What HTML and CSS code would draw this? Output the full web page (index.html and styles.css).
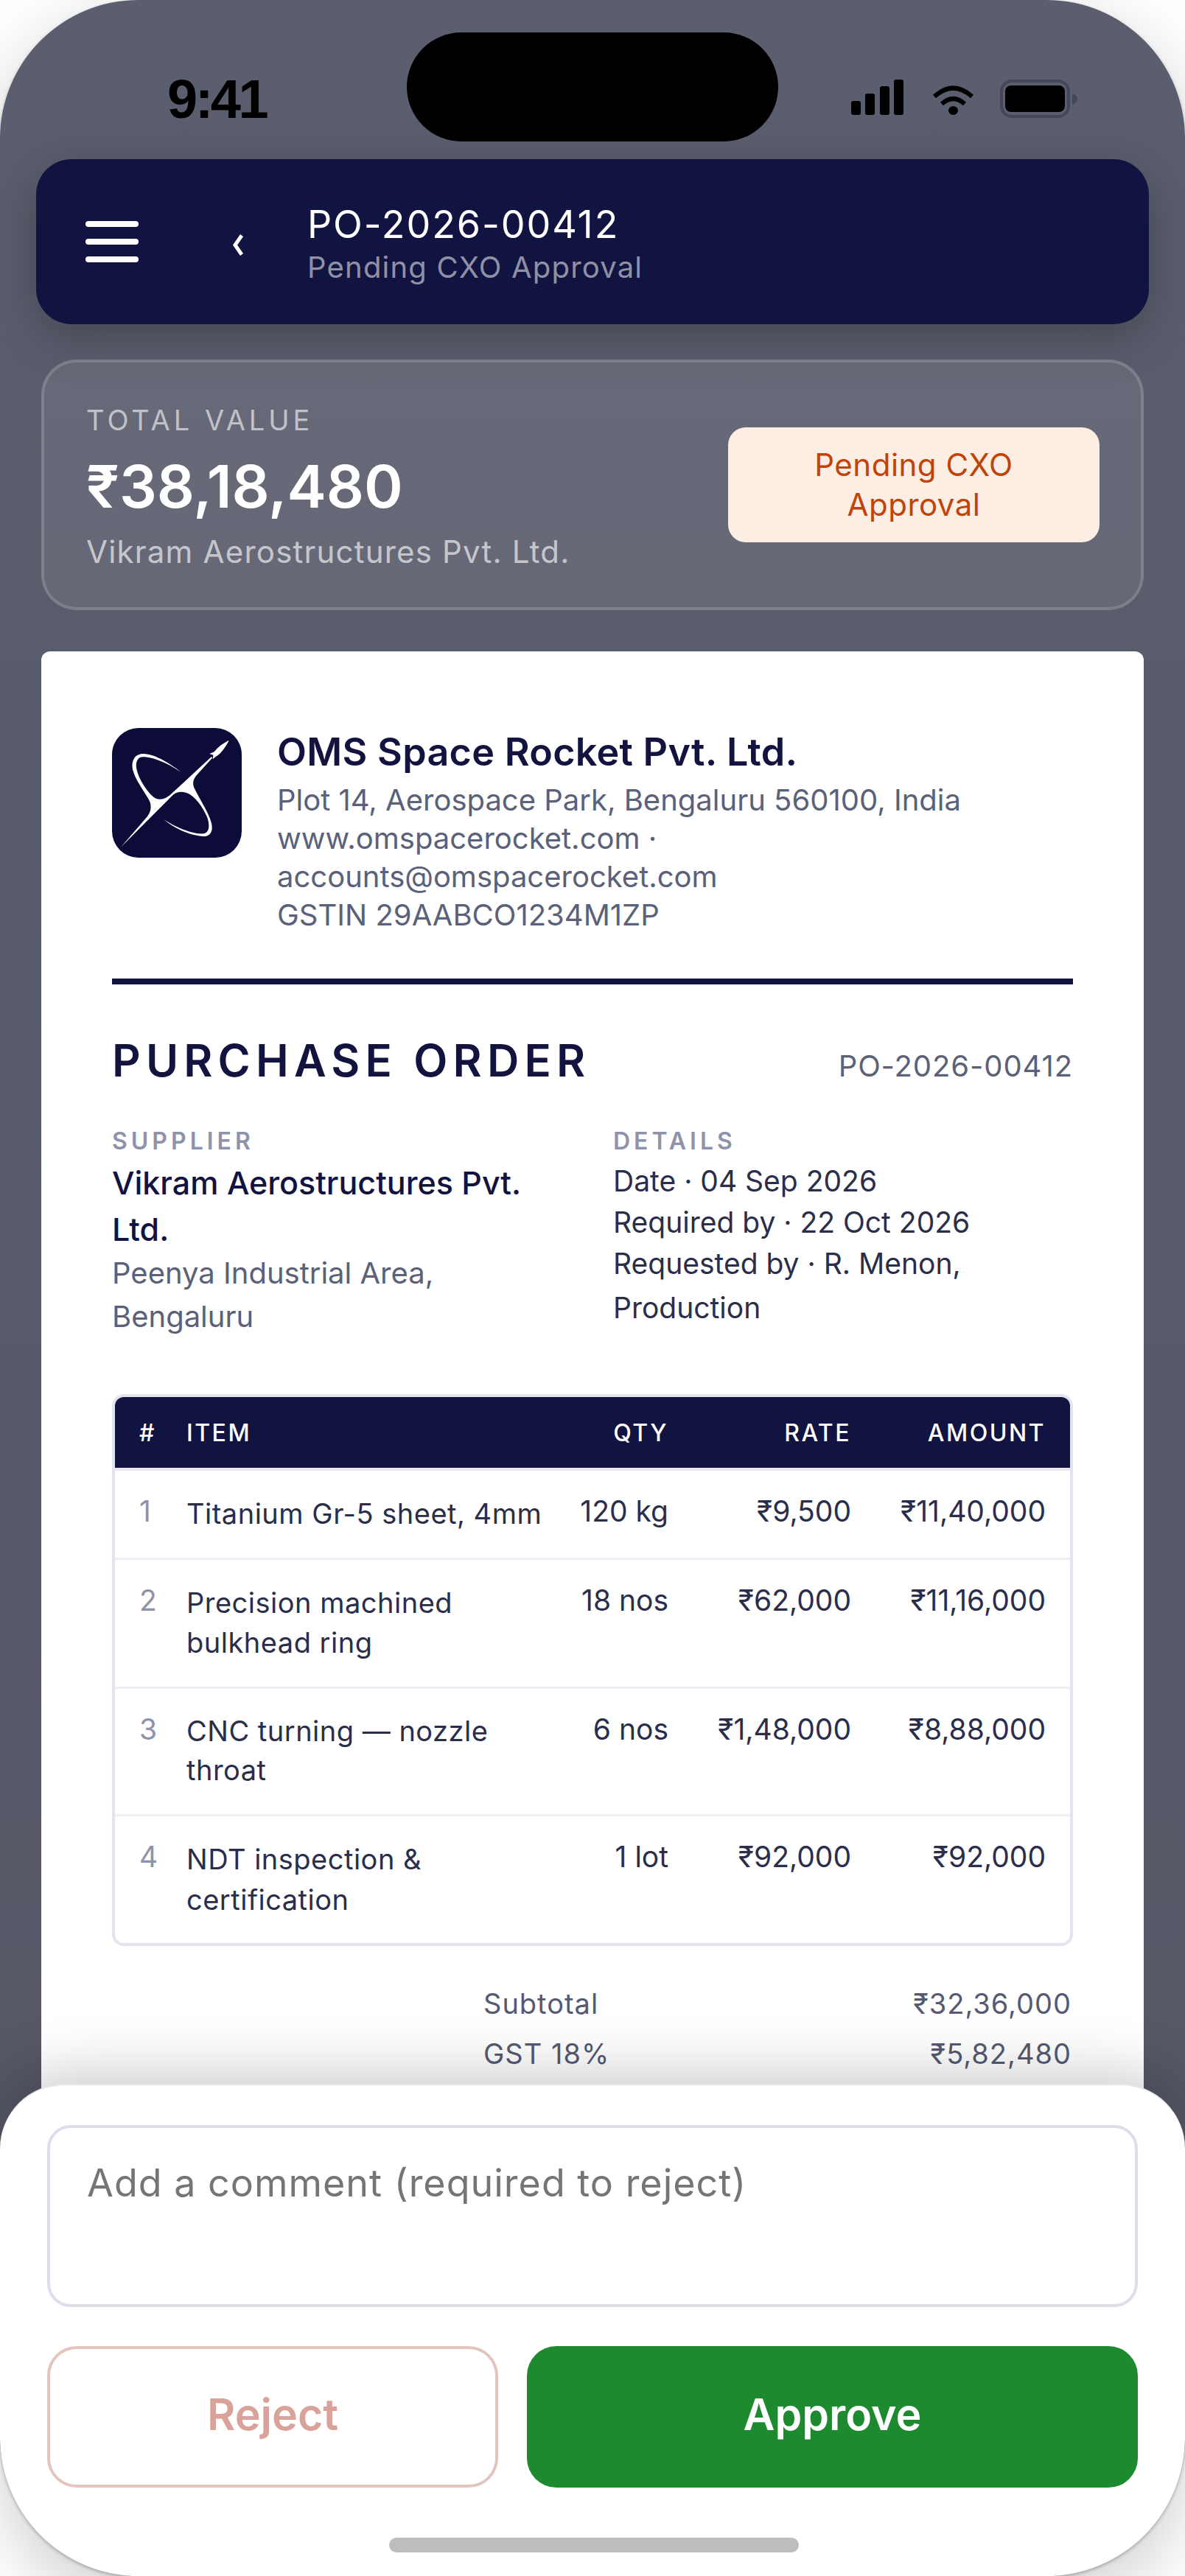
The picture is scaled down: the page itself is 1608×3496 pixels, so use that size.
FILE: index.html
```html
<!doctype html>
<html>
<head>
<meta charset="utf-8">
<title>PO-2026-00412</title>
<link rel="stylesheet" href="styles.css">
</head>

<body>
<div class="phone">
	<div class="island"></div>

	<div class="status">
		<span class="time">9:41</span>
		<div class="status-icons">
			<svg class="ico-signal" width="71" height="48" viewBox="0 0 71 48">
				<rect x="0" y="29" width="13" height="19" rx="3"/>
				<rect x="19" y="19" width="13" height="29" rx="3"/>
				<rect x="39" y="9" width="13" height="39" rx="3"/>
				<rect x="58" y="0" width="13" height="48" rx="3"/>
			</svg>
			<svg class="ico-wifi" width="57" height="42" viewBox="0 0 57 42">
				<path d="M3 17Q28.5 -6 54 17" fill="none" stroke="#000" stroke-width="6"/>
				<path d="M13 27Q28.5 13 44 27" fill="none" stroke="#000" stroke-width="6"/>
				<ellipse cx="28.5" cy="36" rx="6.5" ry="6"/>
			</svg>
			<svg class="ico-battery" width="105" height="52" viewBox="0 0 105 52">
				<rect x="2" y="2" width="91" height="48" rx="14" fill="none" stroke="#44465a" stroke-width="4"/>
				<rect x="7" y="8" width="81" height="36" rx="8"/>
				<path d="M98 19C102 20 105 23 105 26C105 29 102 32 98 34Z" fill="#44465a"/>
			</svg>
		</div>
	</div>

	<div class="topbar">
		<div class="burger"><span></span><span></span><span></span></div>
		<svg class="back" width="16" height="29" viewBox="0 0 16 29">
			<path d="M13 1.5L4 14.5L13 27.5" fill="none" stroke="#fff" stroke-width="5"/>
		</svg>
		<div>
			<div class="topbar-title">PO-2026-00412</div>
			<div class="topbar-sub">Pending CXO Approval</div>
		</div>
	</div>

	<div class="summary">
		<div class="summary-left">
			<div class="summary-label">TOTAL VALUE</div>
			<div class="summary-amount">₹38,18,480</div>
			<div class="summary-vendor">Vikram Aerostructures Pvt. Ltd.</div>
		</div>
		<div class="badge">Pending CXO<br>Approval</div>
	</div>

	<div class="doc">
		<div class="doc-head">
			<svg class="logo" width="176" height="176" viewBox="36 25 528 528">
				<rect x="36" y="25" width="528" height="528" rx="108" fill="#0d0b38"/>
				<path fill="#fff" d="M72 510L180 385C195 365 197 345 190 325C170 285 132 240 122 200C112 165 125 132 160 130C210 128 280 175 322 208C275 175 205 142 160 143C136 145 130 170 138 200C150 245 190 300 215 312C235 320 255 312 272 298L286 296Z"/>
				<path fill="#fff" d="M272 298L440 143L445 146L378 220C362 240 365 258 372 272C395 320 430 370 440 410C450 445 435 467 408 466C360 465 290 435 247 397C295 430 365 458 408 455C432 452 436 420 422 385C400 335 360 285 320 285C305 285 295 288 283 298Z"/>
				<path fill="#fff" d="M512 76C490 85 465 105 452 122L433 130L448 135L446 152L458 142C480 130 500 100 512 76Z"/>
			</svg>
			<div>
				<div class="co-name">OMS Space Rocket Pvt. Ltd.</div>
				<div class="co-line">Plot 14, Aerospace Park, Bengaluru 560100, India</div>
				<div class="co-line">www.omspacerocket.com ·<br>accounts@omspacerocket.com</div>
				<div class="co-line">GSTIN 29AABCO1234M1ZP</div>
			</div>
		</div>

		<div class="doc-title">
			<h1>PURCHASE ORDER</h1>
			<span>PO-2026-00412</span>
		</div>

		<div class="parties">
			<div>
				<div class="label">SUPPLIER</div>
				<div class="supplier-name">Vikram Aerostructures Pvt. Ltd.</div>
				<div class="supplier-addr">Peenya Industrial Area,<br>Bengaluru</div>
			</div>
			<div>
				<div class="label">DETAILS</div>
				<div class="detail">Date · 04 Sep 2026</div>
				<div class="detail">Required by · 22 Oct 2026</div>
				<div class="detail">Requested by · R. Menon,<br>Production</div>
			</div>
		</div>

		<div class="lines">
			<table>
				<colgroup>
					<col class="c-num"><col class="c-item"><col class="c-qty"><col class="c-rate"><col class="c-amt">
				</colgroup>
				<thead>
					<tr><th>#</th><th>ITEM</th><th class="num">QTY</th><th class="num">RATE</th><th class="num amt">AMOUNT</th></tr>
				</thead>
				<tbody>
					<tr>
						<td class="idx">1</td><td class="item">Titanium Gr-5 sheet, 4mm</td>
						<td class="num">120 kg</td><td class="num">₹9,500</td><td class="num amt">₹11,40,000</td>
					</tr>
					<tr>
						<td class="idx">2</td><td class="item">Precision machined bulkhead ring</td>
						<td class="num">18 nos</td><td class="num">₹62,000</td><td class="num amt">₹11,16,000</td>
					</tr>
					<tr class="r3">
						<td class="idx">3</td><td class="item">CNC turning — nozzle throat</td>
						<td class="num">6 nos</td><td class="num">₹1,48,000</td><td class="num amt">₹8,88,000</td>
					</tr>
					<tr class="r4">
						<td class="idx">4</td><td class="item">NDT inspection &amp; certification</td>
						<td class="num">1 lot</td><td class="num">₹92,000</td><td class="num amt">₹92,000</td>
					</tr>
				</tbody>
			</table>
		</div>

		<div class="totals">
			<div class="total-row"><span>Subtotal</span><span>₹32,36,000</span></div>
			<div class="total-row"><span>GST 18%</span><span>₹5,82,480</span></div>
		</div>
	</div>

	<div class="sheet">
		<div class="comment">Add a comment (required to reject)</div>
		<div class="actions">
			<button class="btn btn-reject">Reject</button>
			<button class="btn btn-approve">Approve</button>
		</div>
		<div class="homebar"></div>
	</div>
</div>
</body>
</html>
```

FILE: styles.css
```css
*{margin:0; padding:0; box-sizing:border-box;}
html,body{height:3496px; overflow:hidden; background:#fff;}
body{font-family:Inter,"Noto Sans",sans-serif;}

.phone{position:relative; width:1608px; height:3496px; overflow:hidden; border-radius:188px; background:linear-gradient(#5b5e6e,#545664); box-shadow:0 2px 4px rgba(0,0,0,.25),0 30px 100px rgba(0,0,0,.2);}
.island{position:absolute; top:44px; left:552px; width:504px; height:148px; border-radius:74px; background:#000;}

/* status bar */
.status{height:216px; padding:99px 146px 0 227px; display:flex; justify-content:space-between; align-items:flex-start;}
.time{font:bold 74px/72px "Liberation Sans",Arial,sans-serif; letter-spacing:-3.5px; color:#000;}
.status-icons{display:flex; align-items:flex-start; margin-top:9px;}
.ico-wifi{margin:6px 0 0 39px;}
.ico-battery{margin-left:35px;}

/* top bar */
.topbar{height:224px; margin:0 49px; padding-left:67px; display:flex; align-items:center; background:#111340; border-radius:48px; box-shadow:0 16px 64px rgba(0,0,0,.25);}
.burger{width:72px; display:flex; flex-direction:column; gap:16px;}
.burger span{height:8px; border-radius:4px; background:#fff;}
.back{margin:8px 86px 0 127px;}
.topbar-title{font-size:52px; line-height:70px; letter-spacing:1.9px; color:#fff;}
.topbar-sub{font-size:40px; line-height:46px; letter-spacing:1.2px; color:rgba(255,255,255,.55);}

/* summary card */
.summary{height:340px; margin:48px 56px 0; padding:0 56px 0 57px; display:flex; justify-content:space-between; align-items:center; background:rgba(255,255,255,.08); border:4px solid rgba(255,255,255,.15); border-radius:48px;}
.summary-left{padding-top:6px;}
.summary-label{font-size:38px; line-height:48px; letter-spacing:5px; color:rgba(255,255,255,.6);}
.summary-amount{font-size:80px; line-height:96px; font-weight:600; margin-top:18px; color:#fff;}
.summary-vendor{font-size:42px; line-height:56px; letter-spacing:1.2px; margin-top:13px; color:rgba(255,255,255,.65);}
.badge{width:504px; height:156px; display:flex; align-items:center; justify-content:center; text-align:center; font-size:42px; line-height:54px; letter-spacing:.5px; background:#fdeee3; color:#c0430a; border-radius:24px;}

/* document */
.doc{height:2200px; margin:56px 56px 0; padding:104px 96px 0; background:#fff; border-radius:12px;}
.doc-head{display:flex; gap:48px; padding-bottom:60px; border-bottom:8px solid #12133f;}
.logo{flex:none;}
.co-name{font-size:52px; line-height:66px; font-weight:600; letter-spacing:.3px; color:#12133f; margin-bottom:6px;}
.co-line{font-size:40px; line-height:52px; color:#5a6178;}
.doc-title{display:flex; justify-content:space-between; align-items:baseline; margin-top:67px;}
.doc-title h1{font-size:60px; line-height:72px; font-weight:600; letter-spacing:7.2px; color:#12133f;}
.doc-title span{font-size:40px; letter-spacing:.9px; color:#5a6178;}
.parties{display:grid; grid-template-columns:1fr 1fr; gap:56px; margin-top:54px;}
.label{font-size:32px; line-height:40px; font-weight:600; letter-spacing:5px; color:#8e93a9;}
.supplier-name{font-size:43px; line-height:63px; font-weight:500; color:#12133f; margin-top:5px;}
.supplier-addr{font-size:40px; line-height:59px; margin-top:-2px; color:#5a6178;}
.detail{font-size:39px; line-height:60px; color:#2a2e4a; margin-bottom:-4px;}
.label + .detail{margin-top:4px;}

/* line items */
.lines{margin-top:76px; border:4px solid #e2e5ef; border-radius:16px; overflow:hidden;}
.lines table{width:100%; border-collapse:separate; border-spacing:0; table-layout:fixed;}
.c-num{width:97px;}
.c-item{width:502px;}
.c-qty{width:152px;}
.c-rate{width:248px;}
.lines th{height:96px; background:#111340; color:#fff; font-size:32px; font-weight:500; letter-spacing:2.5px; text-align:left;}
.lines th:first-child,.lines td:first-child{padding-left:33px;}
.lines td{padding:28px 0 33px; font-size:39px; line-height:54px; color:#2a2e4a; vertical-align:top; border-top:3px solid #eeeff5;}
.lines td.item{padding-top:31px; font-size:38px; letter-spacing:.5px; color:#2a2e4a;}
.lines td.idx{color:#8e93a9;}
.lines .num{text-align:right;}
.lines .amt{padding-right:33px;}
.lines tbody tr:first-child td{border-top:4px solid #e8e9f1;}
.r3 td.item{line-height:53px;}
.r4 td.item{line-height:55px; padding-bottom:31px;}

/* totals */
.totals{margin:44px 2px 0 504px;}
.total-row{display:flex; justify-content:space-between; font-size:38px; line-height:68px; letter-spacing:1px; color:#555a72;}

/* bottom sheet */
.sheet{position:absolute; left:0; right:0; top:2828px; bottom:0; padding:54px 64px 0; background:#fff; border-top:2px solid #e4e6ee; border-radius:88px 88px 0 0; box-shadow:0 -16px 80px rgba(0,0,0,.2);}
.comment{height:247px; padding:40px 50px; border:4px solid #dcdfe9; border-radius:32px; font-size:52px; line-height:70px; letter-spacing:1px; color:#757575;}
.actions{display:flex; gap:39px; margin-top:53px;}
.btn{height:192px; padding-bottom:8px; border-radius:40px; font:600 59px Inter,sans-serif;}
.btn-reject{flex:0 0 612px; background:#fff; border:4px solid #e3c5c0; color:#d9a29b;}
.btn-approve{flex:1; background:#1e8a30; border:0; color:#fff;}
.homebar{width:556px; height:20px; margin:68px 0 0 464px; border-radius:10px; background:#bdbdbd;}
```
